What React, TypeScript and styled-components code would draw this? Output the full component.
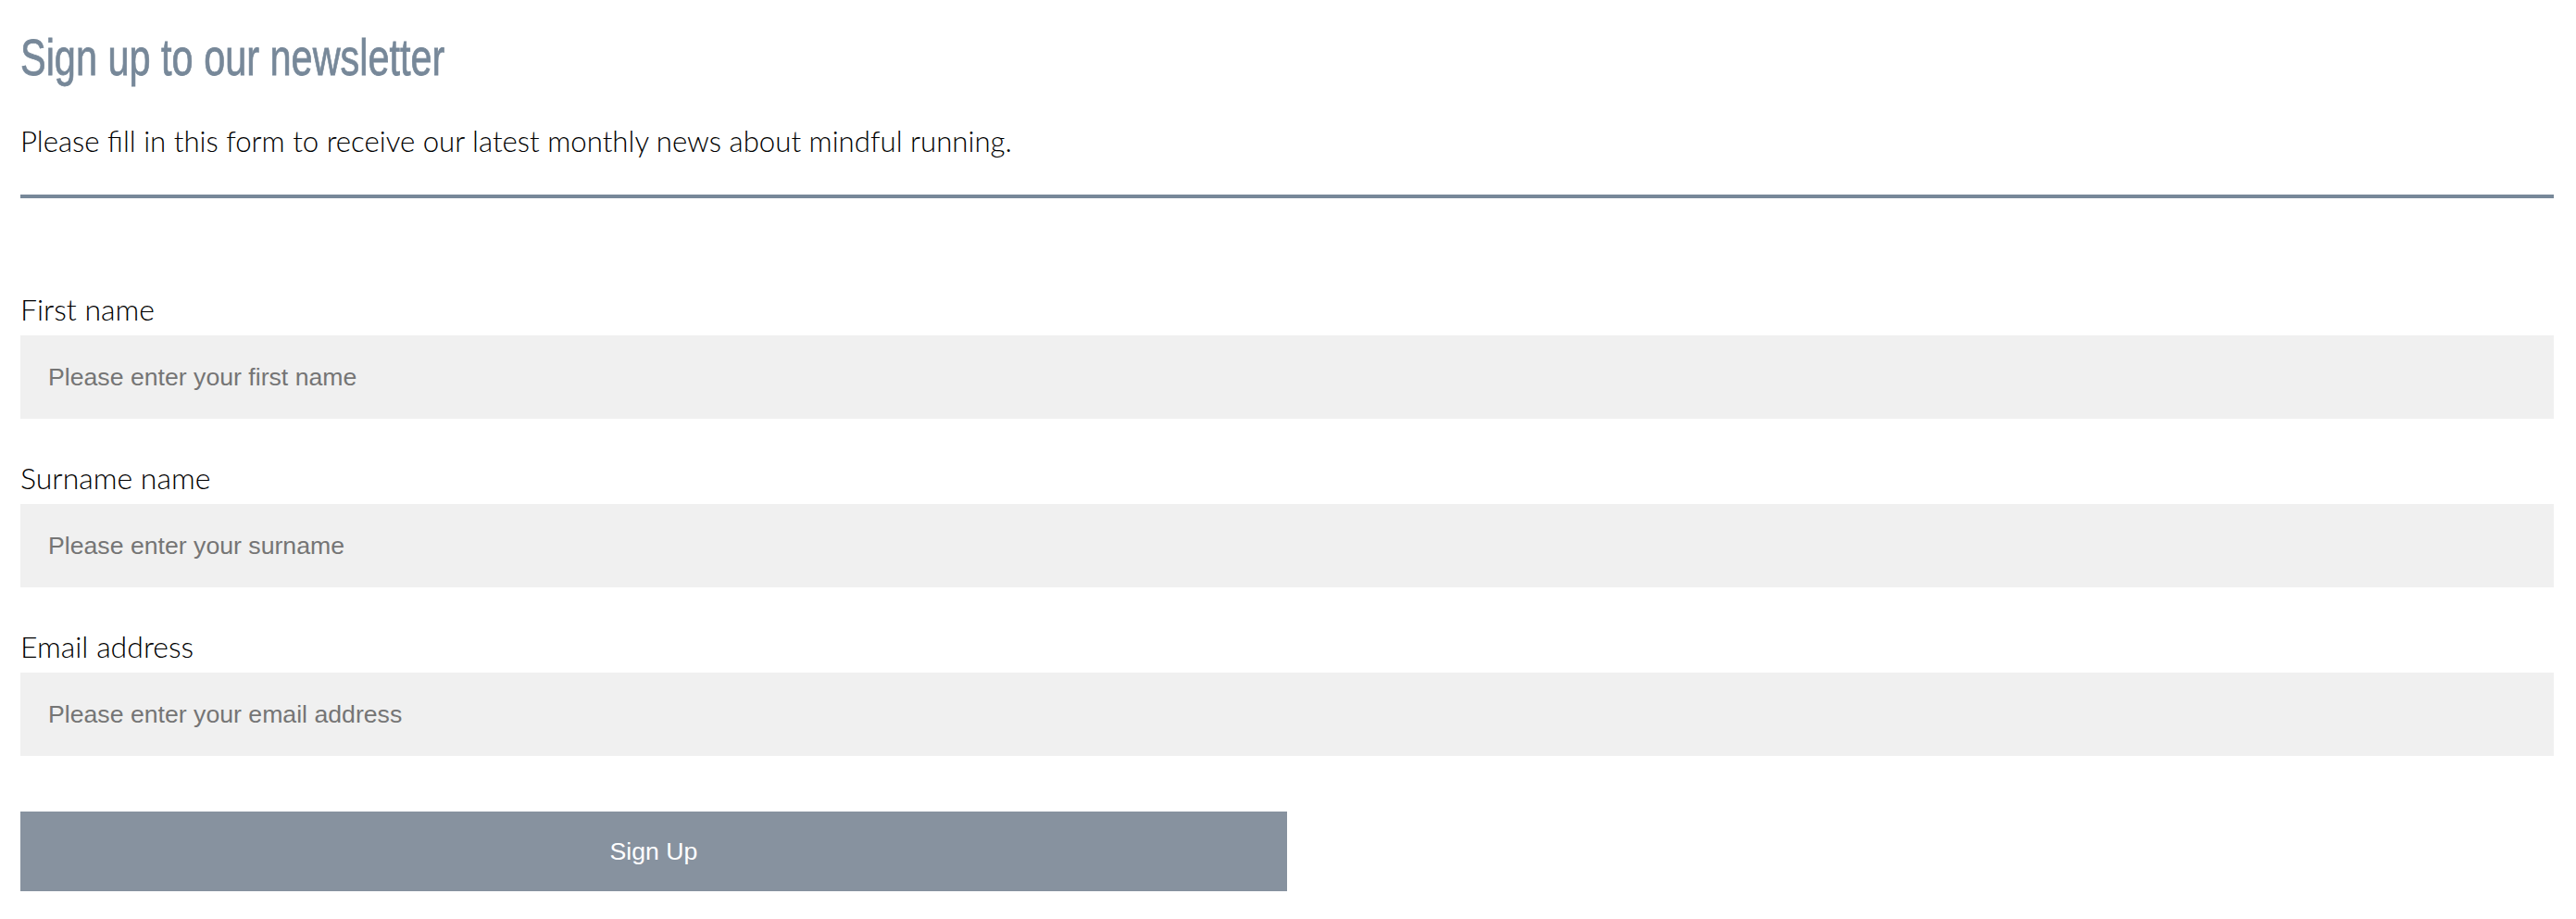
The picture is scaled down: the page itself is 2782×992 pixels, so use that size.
import React from "react";
import styled, { createGlobalStyle } from "styled-components";

const GlobalStyle = createGlobalStyle`
  html, body {
    margin: 0;
    padding: 0;
    background: #ffffff;
  }
  * { box-sizing: border-box; }
`;

const Page = styled.main`
  padding: 0 24px 0 22px;
  font-family: Lato, "Open Sans", sans-serif;
  color: #000;
`;

const Header = styled.header`
  display: flex;
  flex-direction: column;
  padding-top: 30px;
`;

const Title = styled.h1`
  align-self: flex-start;
  margin: 0;
  font-family: "Liberation Sans", Arial, sans-serif;
  font-weight: 400;
  font-size: 56px;
  line-height: 64px;
  color: #778899;
  white-space: nowrap;
  -webkit-text-stroke: 0.8px #778899;
  transform: scaleX(0.74);
  transform-origin: left center;
`;

const Intro = styled.p`
  margin: 40px 0 0 0;
  font-family: Lato, sans-serif;
  font-weight: 300;
  font-size: 31.2px;
  line-height: 36px;
  color: #000;
`;

const Rule = styled.hr`
  margin: 40px 0 0 0;
  border: none;
  height: 4px;
  background: #778899;
`;

const Form = styled.form`
  display: flex;
  flex-direction: column;
  gap: 46px;
  padding-top: 102px;
`;

const Field = styled.div`
  display: flex;
  flex-direction: column;
  gap: 10px;
`;

const Label = styled.label`
  font-family: Lato, sans-serif;
  font-weight: 300;
  font-size: 32px;
  line-height: 36px;
  color: #000;
`;

const Input = styled.input`
  height: 90px;
  width: 100%;
  border: none;
  outline: none;
  background: #f0f0f0;
  padding: 0 30px;
  font-family: "Liberation Sans", Arial, sans-serif;
  font-size: 26.67px;
  color: #333;
  &::placeholder {
    color: #757575;
  }
`;

const Actions = styled.div`
  display: flex;
  padding-top: 14px;
`;

const Button = styled.button`
  width: 50%;
  height: 86px;
  border: none;
  background: #87929f;
  color: #ffffff;
  font-family: "Liberation Sans", Arial, sans-serif;
  font-size: 26.67px;
  cursor: pointer;
`;

export default function App() {
  return (
    <>
      <GlobalStyle />
      <Page>
        <Header>
          <Title>Sign up to our newsletter</Title>
          <Intro>Please fill in this form to receive our latest monthly news about mindful running.</Intro>
          <Rule />
        </Header>
        <Form onSubmit={(e) => e.preventDefault()}>
          <Field>
            <Label htmlFor="first">First name</Label>
            <Input id="first" type="text" placeholder="Please enter your first name" />
          </Field>
          <Field>
            <Label htmlFor="surname">Surname name</Label>
            <Input id="surname" type="text" placeholder="Please enter your surname" />
          </Field>
          <Field>
            <Label htmlFor="email">Email address</Label>
            <Input id="email" type="email" placeholder="Please enter your email address" />
          </Field>
          <Actions>
            <Button type="submit">Sign Up</Button>
          </Actions>
        </Form>
      </Page>
    </>
  );
}
